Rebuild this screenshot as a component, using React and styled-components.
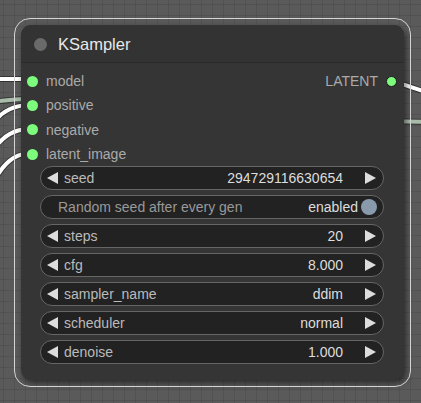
import React from 'react';
import styled, { createGlobalStyle } from 'styled-components';

const GlobalStyle = createGlobalStyle`
    html, body {
        margin: 0;
        padding: 0;
        background: #595959;
    }
`;

const Canvas = styled.div`
    position: relative;
    width: 421px;
    height: 403px;
    overflow: hidden;
    font-family: "Liberation Sans", Arial, sans-serif;
    background-color: #5a5a5a;
    background-image:
        linear-gradient(rgba(0, 0, 0, 0.09) 1px, transparent 1px),
        linear-gradient(90deg, rgba(0, 0, 0, 0.09) 1px, transparent 1px);
    background-size: 11px 11px;
    background-position: 3px 4px;
`;

const Wires = styled.svg`
    position: absolute;
    left: 0;
    top: 0;
`;

const Node = styled.div`
    position: absolute;
    left: 21px;
    top: 25px;
    width: 383px;
    height: 355px;
    background: #353535;
    border-radius: 10px;
    box-shadow: 2px 3px 6px rgba(0, 0, 0, 0.55);
    display: flex;
    flex-direction: column;

    &::before {
        content: '';
        position: absolute;
        inset: -7px;
        border: 1.5px solid #d4d4d4;
        border-radius: 16px;
        pointer-events: none;
    }
`;

const TitleBar = styled.div`
    height: 38px;
    box-sizing: border-box;
    display: flex;
    align-items: center;
    padding: 2px 0 0 13px;
    gap: 11px;
    background: #333333;
    border-radius: 10px 10px 0 0;
    border-bottom: 1px solid #2a2a2a;
`;

const TitleDot = styled.div`
    width: 13px;
    height: 13px;
    border-radius: 50%;
    background: #6a6a6a;
`;

const Title = styled.div`
    color: #e8e8e8;
    font-size: 16.5px;
`;

const Slots = styled.div`
    display: flex;
    justify-content: space-between;
    padding: 6px 0 0;
`;

const SlotColumn = styled.div`
    display: flex;
    flex-direction: column;
`;

const Slot = styled.div`
    height: 24.3px;
    display: flex;
    align-items: center;
    gap: 8px;
    flex-direction: ${p => (p.$output ? 'row-reverse' : 'row')};
    padding: ${p => (p.$output ? '0 7px 0 0' : '0 0 0 6px')};
    color: #aaaaaa;
    font-size: 14px;
`;

const SlotDot = styled.div`
    width: 11px;
    height: 11px;
    border-radius: 50%;
    background: #7dfb7d;
    box-sizing: border-box;
    border: ${p => (p.$output ? '1px solid #1c1c1c' : 'none')};
`;

const Widgets = styled.div`
    display: flex;
    flex-direction: column;
    gap: 5px;
    padding: 0 20px 0 19px;
`;

const Widget = styled.div`
    height: 24px;
    box-sizing: border-box;
    background: #222222;
    border: 1px solid #666666;
    border-radius: 12px;
    display: flex;
    align-items: center;
    padding: ${p => (p.$toggle ? '0 6px 0 17px' : '0 7px 0 6px')};
    font-size: 14px;
`;

const Arrow = styled.div`
    width: 0;
    height: 0;
    border-top: 6px solid transparent;
    border-bottom: 6px solid transparent;
    ${p => (p.$right ? 'border-left: 11px solid #dddddd;' : 'border-right: 11px solid #dddddd;')}
`;

const Label = styled.span`
    color: ${p => (p.$dim ? '#999999' : '#bbbbbb')};
    margin-left: ${p => (p.$toggle ? '0' : '6px')};
    flex: 1;
    white-space: nowrap;
`;

const Value = styled.span`
    color: #dddddd;
    margin-right: ${p => (p.$toggle ? '3px' : '22px')};
    white-space: nowrap;
`;

const Knob = styled.div`
    width: 16px;
    height: 16px;
    border-radius: 50%;
    background: #8a9aad;
`;

const inputs = ['model', 'positive', 'negative', 'latent_image'];

const widgets = [
    { name: 'seed', value: '294729116630654' },
    { name: 'Random seed after every gen', value: 'enabled', toggle: true },
    { name: 'steps', value: '20' },
    { name: 'cfg', value: '8.000' },
    { name: 'sampler_name', value: 'ddim' },
    { name: 'scheduler', value: 'normal' },
    { name: 'denoise', value: '1.000' },
];

const Wire = ({ d, color = '#ffffff' }) => (
    <>
        <path d={d} stroke="rgba(0,0,0,0.4)" strokeWidth="6" fill="none" />
        <path d={d} stroke={color} strokeWidth="4" fill="none" />
    </>
);

const App = () => {
    return (
        <>
            <GlobalStyle />
            <Canvas>
                <Wires width="421" height="403">
                    <Wire d="M -10 102 C 5 101, 15 98, 60 98 L 380 121 L 430 122" color="#a9bca9" />
                    <Wire d="M -10 79 L 40 79" />
                    <Wire d="M -25 150 C -3 114, 5 104, 40 104" />
                    <Wire d="M -25 182 C -3 140, 5 128, 40 128" />
                    <Wire d="M -25 225 C -3 170, 5 152, 40 152" />
                    <Wire d="M 391 80 C 405 85, 415 89, 430 93" />
                </Wires>
                <Node>
                    <TitleBar>
                        <TitleDot />
                        <Title>KSampler</Title>
                    </TitleBar>
                    <Slots>
                        <SlotColumn>
                            {inputs.map(name => (
                                <Slot key={name}>
                                    <SlotDot />
                                    {name}
                                </Slot>
                            ))}
                        </SlotColumn>
                        <SlotColumn>
                            <Slot $output>
                                <SlotDot $output />
                                LATENT
                            </Slot>
                        </SlotColumn>
                    </Slots>
                    <Widgets>
                        {widgets.map(w =>
                            w.toggle ? (
                                <Widget key={w.name} $toggle>
                                    <Label $dim $toggle>{w.name}</Label>
                                    <Value $toggle>{w.value}</Value>
                                    <Knob />
                                </Widget>
                            ) : (
                                <Widget key={w.name}>
                                    <Arrow />
                                    <Label>{w.name}</Label>
                                    <Value>{w.value}</Value>
                                    <Arrow $right />
                                </Widget>
                            )
                        )}
                    </Widgets>
                </Node>
            </Canvas>
        </>
    );
};

export default App;
